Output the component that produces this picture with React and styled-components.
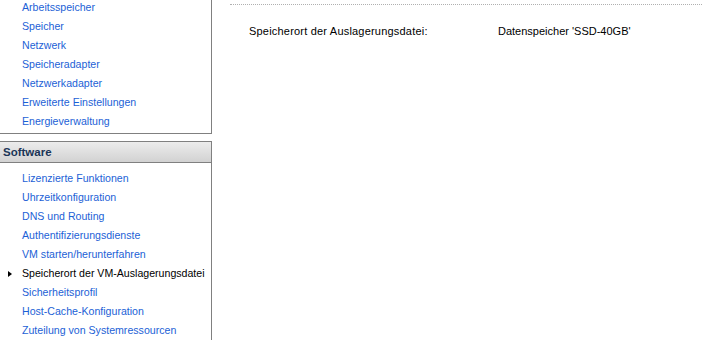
import React from 'react'
import styled, { createGlobalStyle } from 'styled-components'

const GlobalStyle = createGlobalStyle`
  html, body {
    margin: 0;
    padding: 0;
    background: #ffffff;
    overflow: hidden;
  }
  body {
    font-family: "Liberation Sans", Arial, sans-serif;
    font-size: 11px;
  }
`

const Page = styled.div`
  display: flex;
  width: 702px;
  height: 341px;
  overflow: hidden;
`
const Sidebar = styled.div`
  width: 213px;
  flex-shrink: 0;
  margin-left: -1px;
  margin-top: -2px;
`
const Panel = styled.div`
  border: 1px solid #808080;
  border-top: ${p => (p.$open ? 'none' : '1px solid #808080')};
  border-bottom: ${p => (p.$last ? 'none' : '1px solid #808080')};
  padding: ${p => (p.$last ? '6px 0 0' : '0 0 2px')};
  background: #ffffff;
`
const SectionHeader = styled.div`
  margin-top: 7px;
  height: 20px;
  line-height: 20px;
  border: 1px solid #808080;
  border-bottom: none;
  padding-left: 3px;
  font-weight: bold;
  font-size: 11.5px;
  color: #1b3557;
  background: linear-gradient(to bottom, #ececec, #d2d2d2);
`
const NavItem = styled.div`
  position: relative;
  height: 19px;
  line-height: 19px;
  padding-left: 22px;
  font-size: 10.6px;
  color: ${p => (p.$active ? '#000000' : '#1c5fd6')};
  white-space: nowrap;
  &::before {
    content: '';
    display: ${p => (p.$active ? 'block' : 'none')};
    position: absolute;
    left: 8px;
    top: 7px;
    border-left: 4px solid #000000;
    border-top: 3px solid transparent;
    border-bottom: 3px solid transparent;
  }
`
const Content = styled.div`
  flex: 1;
  padding-left: 18px;
`
const DottedRule = styled.div`
  margin-top: 4px;
  border-top: 1px dotted #b0b0b0;
`
const PropRow = styled.div`
  display: grid;
  grid-template-columns: 249px 1fr;
  margin-top: 20px;
  padding-left: 19px;
  color: #000000;
  line-height: 13px;
`
const PropLabel = styled.span`
  letter-spacing: 0.2px;
`

const hardware = [
  'Arbeitsspeicher',
  'Speicher',
  'Netzwerk',
  'Speicheradapter',
  'Netzwerkadapter',
  'Erweiterte Einstellungen',
  'Energieverwaltung',
]
const software = [
  'Lizenzierte Funktionen',
  'Uhrzeitkonfiguration',
  'DNS und Routing',
  'Authentifizierungsdienste',
  'VM starten/herunterfahren',
  'Speicherort der VM-Auslagerungsdatei',
  'Sicherheitsprofil',
  'Host-Cache-Konfiguration',
  'Zuteilung von Systemressourcen',
]

export default function App() {
  return (
    <Page>
      <GlobalStyle />
      <Sidebar>
        <Panel $open>
          {hardware.map(h => <NavItem key={h}>{h}</NavItem>)}
        </Panel>
        <SectionHeader>Software</SectionHeader>
        <Panel $last>
          {software.map(s => (
            <NavItem key={s} $active={s === 'Speicherort der VM-Auslagerungsdatei'}>{s}</NavItem>
          ))}
        </Panel>
      </Sidebar>
      <Content>
        <DottedRule />
        <PropRow>
          <PropLabel>Speicherort der Auslagerungsdatei:</PropLabel>
          <span>Datenspeicher 'SSD-40GB'</span>
        </PropRow>
      </Content>
    </Page>
  )
}
